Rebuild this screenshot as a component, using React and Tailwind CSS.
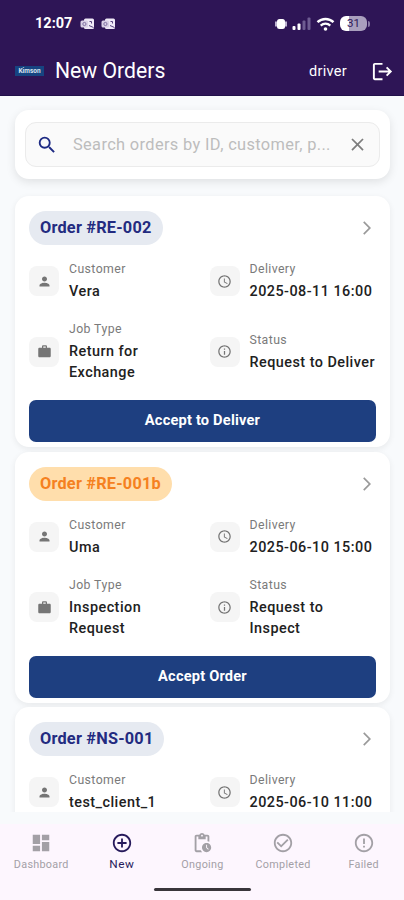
import {
  MdAccessTime,
  MdAddCircleOutline,
  MdArrowForwardIos,
  MdCheckCircleOutline,
  MdClose,
  MdDashboard,
  MdErrorOutline,
  MdInfoOutline,
  MdLogout,
  MdPendingActions,
  MdPerson,
  MdSearch,
  MdWork,
} from "react-icons/md";

const orders = [
  {
    id: "RE-002",
    customer: "Vera",
    delivery: "2025-08-11 16:00",
    jobType: "Return for Exchange",
    status: "Request to Deliver",
    action: "Accept to Deliver",
  },
  {
    id: "RE-001b",
    customer: "Uma",
    delivery: "2025-06-10 15:00",
    jobType: "Inspection Request",
    status: "Request to Inspect",
    action: "Accept Order",
    urgent: true,
  },
  {
    id: "NS-001",
    customer: "test_client_1",
    delivery: "2025-06-10 11:00",
  },
];

const tabs = [
  { label: "Dashboard", icon: MdDashboard },
  { label: "New", icon: MdAddCircleOutline, active: true },
  { label: "Ongoing", icon: MdPendingActions },
  { label: "Completed", icon: MdCheckCircleOutline },
  { label: "Failed", icon: MdErrorOutline },
];

function OutlookIcon() {
  return (
    <svg width="15" height="12" viewBox="0 0 15 12">
      <rect x="4" y="0.5" width="10" height="10.5" rx="1.5" fill="#efe9f7" />
      <path d="M9 7.5l4.5 2M9.5 3.5h2v2" stroke="#54417c" strokeWidth="1" fill="none" />
      <rect x="0.5" y="2.5" width="7.5" height="7" rx="1.5" fill="#d9d0e6" />
      <circle cx="4.4" cy="6" r="1.6" fill="none" stroke="#8272a3" strokeWidth="1" />
    </svg>
  );
}

function StatusBar() {
  return (
    <div className="flex h-[47px] items-center pl-[35px] pr-[34px] text-white">
      <span className="w-[38px] whitespace-nowrap text-[14.5px] font-bold">12:07</span>
      <div className="ml-[7px] flex gap-[6px]">
        <OutlookIcon />
        <OutlookIcon />
      </div>
      <div className="ml-auto flex items-center">
        <svg width="14" height="12" viewBox="0 0 14 12">
          <rect x="3" y="1" width="8" height="10" rx="2.5" fill="#fff" />
          <path d="M2 3.5v5M12 3.5v5" stroke="#cfc6df" strokeWidth="1.8" />
        </svg>
        <svg className="ml-[4px]" width="19" height="13" viewBox="0 0 19 13">
          <rect x="0.5" y="9" width="3" height="4" rx="1" fill="#fff" />
          <rect x="5.5" y="6.5" width="3" height="6.5" rx="1" fill="#fff" />
          <rect x="10.5" y="3.5" width="3" height="9.5" rx="1" fill="#6e5c92" />
          <rect x="15.5" y="0.5" width="3" height="12.5" rx="1" fill="#6e5c92" />
        </svg>
        <svg className="ml-[5px]" width="19" height="14" viewBox="0 0 19 14">
          <path d="M1.5 5.2a11.5 11.5 0 0 1 16 0" fill="none" stroke="#fff" strokeWidth="2.4" />
          <path d="M4.7 8.6a7 7 0 0 1 9.6 0" fill="none" stroke="#fff" strokeWidth="2.2" />
          <circle cx="9.5" cy="12" r="1.8" fill="#fff" />
        </svg>
        <div className="ml-[5px] flex h-[15px] w-[27px] items-center justify-center rounded-[6px] bg-linear-to-r from-white from-35% to-[#a99fbd] to-35% text-[11.5px] text-[#2e1556]">
          31
        </div>
        <div className="ml-px h-[6px] w-[2px] rounded-r bg-[#8778a5]" />
      </div>
    </div>
  );
}

function Header() {
  return (
    <header className="h-24 shrink-0 border-b border-[#21104a] bg-[#2e1556]">
      <StatusBar />
      <div className="flex h-[48px] items-center pl-[15px] pr-[10px] text-white">
        <div className="flex h-[10px] w-[29px] items-center justify-center bg-[#164481] text-[6.5px] leading-[10px] font-bold text-[#dbe5f0]">
          Kimson
        </div>
        <h1 className="ml-[11px] text-[21.2px] leading-6">New Orders</h1>
        <span className="ml-auto pt-px text-[14.5px] tracking-[0.3px]">driver</span>
        <MdLogout className="ml-[24px] size-[23px]" />
      </div>
    </header>
  );
}

function SearchBar() {
  return (
    <div className="mt-[14px] mr-[14px] ml-[15px] h-[69px] shrink-0 rounded-[14px] bg-white px-[10px] py-[12px] shadow-[0_3px_10px_rgba(0,0,0,0.10)]">
      <div className="flex h-[45px] items-center rounded-[11px] border border-[#ebebeb] bg-[#fafafa] pl-[10px] pr-[11px]">
        <MdSearch className="size-[22px] text-[#1d2a83]" />
        <span className="ml-[15px] pt-px whitespace-nowrap text-[16.4px] tracking-[0.35px] text-[#bdbdbd]">
          Search orders by ID, customer, p...
        </span>
        <MdClose className="ml-auto size-[21px] shrink-0 text-[#7d7d7d]" />
      </div>
    </div>
  );
}

function Field({ icon: Icon, label, value }) {
  return (
    <div className="flex items-center gap-[10px]">
      <div className="flex size-[30px] shrink-0 items-center justify-center rounded-[8px] bg-[#f5f5f5]">
        <Icon className="size-[15px] text-[#757575]" />
      </div>
      <div>
        <div className="mb-[2px] text-[12.3px] leading-[19px] tracking-[0.4px] text-[#7a7a7a]">{label}</div>
        <div className="text-[14.4px] leading-[21px] font-medium tracking-[0.47px] text-[#212121]">{value}</div>
      </div>
    </div>
  );
}

function OrderCard({ order }) {
  return (
    <article className="h-[251px] shrink-0 rounded-[14px] bg-white px-[14px] pt-[15px] shadow-[0_2px_6px_rgba(0,0,0,0.07)]">
      <div className="flex h-[34px] items-center justify-between pr-px">
        <span
          className={
            "flex h-[34px] items-center rounded-full px-[11px] pt-px text-[16.3px] font-bold tracking-[0.22px] " +
            (order.urgent ? "bg-[#ffdeac] text-[#f5811f]" : "bg-[#e6eaf1] text-[#232b80]")
          }
        >
          Order #{order.id}
        </span>
        <MdArrowForwardIos className="size-[16px] text-[#9a9a9a]" />
      </div>
      <div className="mt-[15px] grid grid-cols-[180.5px_1fr] gap-y-[18px]">
        <Field icon={MdPerson} label="Customer" value={order.customer} />
        <Field icon={MdAccessTime} label="Delivery" value={order.delivery} />
        {order.jobType && (
          <div className="w-[130px]">
            <Field icon={MdWork} label="Job Type" value={order.jobType} />
          </div>
        )}
        {order.status && <Field icon={MdInfoOutline} label="Status" value={order.status} />}
      </div>
      {order.action && (
        <button className="mt-[17px] h-[42px] w-full rounded-[7px] bg-[#1e3f80] text-[14.6px] font-bold tracking-[0.2px] text-white">
          {order.action}
        </button>
      )}
    </article>
  );
}

function BottomNav() {
  return (
    <nav className="h-[76px] shrink-0 bg-[#fdf6fe]">
      <div className="grid grid-cols-5 pt-[8px] pl-px">
        {tabs.map(({ label, icon: Icon, active }) => (
          <div
            key={label}
            className={"flex flex-col items-center " + (active ? "text-[#271b5c]" : "text-[#a3a0a6]")}
          >
            <Icon className="size-[22px]" />
            <span
              className={
                "mt-[2px] leading-[17px] " +
                (active ? "text-[11.8px] tracking-[0.5px]" : "text-[10.8px] tracking-[0.3px]")
              }
            >
              {label}
            </span>
          </div>
        ))}
      </div>
      <div className="mx-auto mt-[15px] h-[3px] w-[97px] rounded-full bg-[#39353b]" />
    </nav>
  );
}

export default function App() {
  return (
    <div className="flex h-[900px] w-[404px] flex-col overflow-hidden bg-[#f8fafc] font-['Roboto',sans-serif]">
      <Header />
      <SearchBar />
      <main className="mt-[13px] mb-[12px] flex min-h-0 flex-1 flex-col gap-[4.5px] overflow-hidden pt-[4px] pr-[14px] pl-[15px]">
        {orders.map((order) => (
          <OrderCard key={order.id} order={order} />
        ))}
      </main>
      <BottomNav />
    </div>
  );
}
